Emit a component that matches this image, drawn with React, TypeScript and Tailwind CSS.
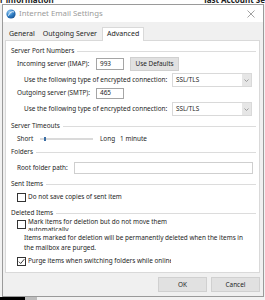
import React from "react";

const font = { fontFamily: '"Noto Sans", "Open Sans", Arial, sans-serif' };

function GroupHeader({ label, className = "" }: { label: string; className?: string }) {
  return (
    <div className={`flex items-center h-[12px] pl-[5px] pr-[3px] ${className}`}>
      <span className="whitespace-nowrap">{label}</span>
      <div className="flex-1 h-px bg-[#dcdcdc] ml-[3px]" />
    </div>
  );
}

function Checkbox({ checked = false }: { checked?: boolean }) {
  return (
    <div className="w-[9px] h-[9px] border border-[#333] bg-white shrink-0 flex items-center justify-center">
      {checked && (
        <svg width="7" height="7" viewBox="0 0 7 7">
          <path d="M0.8 3.6 L2.7 5.5 L6.3 1.2" fill="none" stroke="#222" strokeWidth="0.9" />
        </svg>
      )}
    </div>
  );
}

function Select({ value }: { value: string }) {
  return (
    <div className="w-[80px] h-[14px] border border-[#d9d9d9] bg-white flex items-center shrink-0">
      <span className="flex-1 pl-[3px]">{value}</span>
      <div className="w-[9px] h-full bg-[#e6e6e6] flex items-center justify-center">
        <svg width="5" height="3" viewBox="0 0 5 3">
          <path d="M0.5 0.5 L2.5 2.5 L4.5 0.5" fill="none" stroke="#8a8a8a" strokeWidth="0.8" />
        </svg>
      </div>
    </div>
  );
}

export default function App() {
  return (
    <div
      className="w-[265px] h-[300px] bg-[#f2f2f2] overflow-hidden text-[6.4px] text-[#1e1e1e] flex flex-col"
      style={font}
    >
      {/* background window strip */}
      <div className="h-[4px] overflow-hidden bg-white flex justify-between shrink-0">
        <span className="text-[8px] leading-[8px] -mt-[4px] font-bold text-[#222]">r information</span>
        <span className="text-[8px] leading-[8px] -mt-[4px] font-bold text-[#222]">last Account Se</span>
      </div>

      {/* dialog */}
      <div className="ml-[2px] w-[262px] h-[293px] border border-[#9a9a9a] bg-[#f0f0f0] flex flex-col shrink-0">
        {/* title bar */}
        <div className="h-[17px] bg-white flex items-center shrink-0">
          <svg width="10" height="10" viewBox="0 0 10 10" className="ml-[3px]">
            <defs>
              <radialGradient id="g" cx="0.35" cy="0.3" r="0.8">
                <stop offset="0" stopColor="#9fd0f5" />
                <stop offset="0.5" stopColor="#2f7fc6" />
                <stop offset="1" stopColor="#174f8c" />
              </radialGradient>
            </defs>
            <circle cx="5" cy="5" r="4.6" fill="url(#g)" />
            <path d="M2.2 6.8 Q5 1.5 8 3" fill="none" stroke="#ffffff" strokeWidth="0.9" />
          </svg>
          <span className="ml-[3px] text-[7.8px] text-[#9b9b9b]">Internet Email Settings</span>
          <div className="flex-1" />
          <svg width="8" height="8" viewBox="0 0 8 8" className="mr-[8px]">
            <path d="M0.5 0.5 L7.5 7.5 M7.5 0.5 L0.5 7.5" stroke="#8a8a8a" strokeWidth="0.8" />
          </svg>
        </div>

        {/* body */}
        <div className="flex-1 flex flex-col pl-[2px] pr-[3px] pt-[4px]">
          {/* tabs */}
          <div className="h-[14px] flex items-end shrink-0 pl-[4px] text-[7px]">
            <div className="h-[12px] flex items-center pr-[8px]">General</div>
            <div className="h-[12px] flex items-center pr-[5px]">Outgoing Server</div>
            <div className="h-[14px] flex items-center px-[4px] bg-white border border-b-0 border-[#d9d9d9] -mb-px relative z-10">
              Advanced
            </div>
          </div>

          {/* panel */}
          <div className="h-[233px] bg-white border border-[#d9d9d9] flex flex-col pt-[4px] shrink-0">
            <GroupHeader label="Server Port Numbers" />
            <div className="h-[14px] flex items-center pl-[11px]">
              <span className="w-[79px] whitespace-nowrap">Incoming server (IMAP):</span>
              <div className="w-[28px] h-[12px] border border-[#a5a5a5] flex items-center pl-[3px]">993</div>
              <div className="ml-[6px] w-[49px] h-[14px] bg-[#e1e1e1] border border-[#d0d0d0] flex items-center justify-center">
                Use Defaults
              </div>
            </div>
            <div className="mt-[2px] h-[14px] flex items-center pl-[18px]">
              <span className="w-[148px] whitespace-nowrap">Use the following type of encrypted connection:</span>
              <Select value="SSL/TLS" />
            </div>
            <div className="h-[12px] flex items-center pl-[11px]">
              <span className="w-[79px] whitespace-nowrap">Outgoing server (SMTP):</span>
              <div className="w-[28px] h-[11px] border border-[#a5a5a5] flex items-center pl-[3px]">465</div>
            </div>
            <div className="mt-[3px] h-[14px] flex items-center pl-[18px]">
              <span className="w-[148px] whitespace-nowrap">Use the following type of encrypted connection:</span>
              <Select value="SSL/TLS" />
            </div>

            <GroupHeader label="Server Timeouts" className="mt-[4px]" />
            <div className="h-[13px] flex items-center pl-[11px]">
              <span className="w-[23px]">Short</span>
              <div className="w-[53px] h-[2px] bg-[#dadada] relative">
                <div className="absolute left-[4px] -top-[1px] w-[2px] h-[4px] bg-[#3a6ea5]" />
              </div>
              <span className="ml-[7px]">Long</span>
              <span className="ml-[5px]">1 minute</span>
            </div>

            <GroupHeader label="Folders" className="mt-[1px]" />
            <div className="mt-[3px] h-[14px] flex items-center pl-[11px]">
              <span className="w-[57px] whitespace-nowrap">Root folder path:</span>
              <div className="w-[179px] h-[12px] border border-[#cfcfcf]" />
            </div>

            <GroupHeader label="Sent Items" className="mt-[3px]" />
            <div className="mt-[1px] h-[12px] flex items-center pl-[11px]">
              <Checkbox />
              <span className="ml-[2px]">Do not save copies of sent item</span>
            </div>

            <GroupHeader label="Deleted Items" className="mt-[4px]" />
            <div className="h-[13px] flex items-start pl-[11px]">
              <div className="mt-[1px]">
                <Checkbox />
              </div>
              <div className="ml-[2px] h-[12px] overflow-hidden">
                <div className="-mt-[1px] leading-[8px]">
                  Mark items for deletion but do not move them
                  <br />
                  automatically
                </div>
              </div>
            </div>
            <div className="mt-[1px] pl-[18px] leading-[10px]">
              <div className="h-[10px] whitespace-nowrap">
                Items marked for deletion will be permanently deleted when the items in
              </div>
              <div className="h-[10px] whitespace-nowrap">the mailbox are purged.</div>
            </div>
            <div className="mt-[3px] h-[10px] flex items-center pl-[11px]">
              <Checkbox checked />
              <div className="ml-[2px] w-[143px] overflow-hidden whitespace-nowrap">
                Purge items when switching folders while online
              </div>
            </div>
          </div>

          {/* footer */}
          <div className="flex-1 flex items-start justify-end pt-[4px] gap-[4px]">
            <div className="w-[49px] h-[15px] bg-[#e1e1e1] border border-[#d0d0d0] flex items-center justify-center">
              OK
            </div>
            <div className="w-[49px] h-[15px] bg-[#e1e1e1] border border-[#d0d0d0] flex items-center justify-center">
              Cancel
            </div>
          </div>
        </div>
      </div>

      {/* taskbar strip */}
      <div className="flex-1 flex">
        <div className="w-[25px] bg-black" />
        <div className="w-[12px] bg-[#bdbdbd]" />
      </div>
    </div>
  );
}
